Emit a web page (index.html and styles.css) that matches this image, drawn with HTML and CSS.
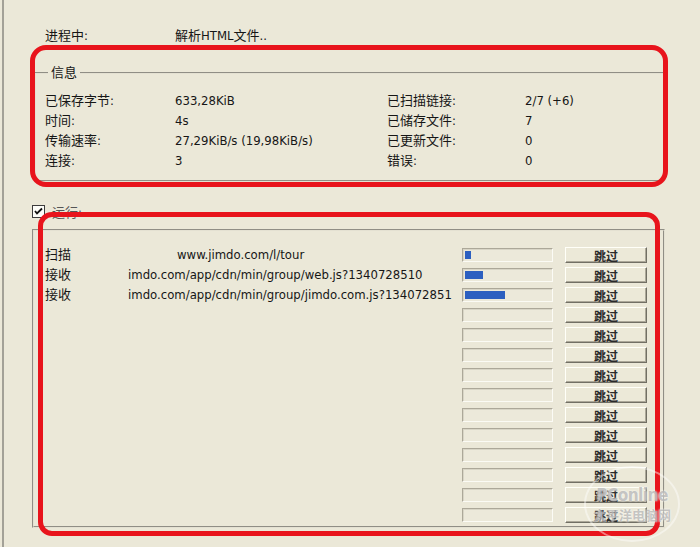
FILE: index.html
```html
<!DOCTYPE html>
<html lang="zh-CN">
<head>
  <meta charset="UTF-8" />
  <title>进程</title>
  <link rel="stylesheet" href="styles.css">
</head>
<body>
  <div class="screen">
    <div class="status">
      <span class="status-label">进程中:</span>
      <span class="status-value">解析HTML文件..</span>
    </div>

    <fieldset class="group info">
      <legend>信息</legend>
      <div class="info-grid">
        <span class="label">已保存字节:</span><span class="value">633,28KiB</span>
        <span class="label">已扫描链接:</span><span class="value">2/7 (+6)</span>
        <span class="label">时间:</span><span class="value">4s</span>
        <span class="label">已储存文件:</span><span class="value">7</span>
        <span class="label">传输速率:</span><span class="value">27,29KiB/s (19,98KiB/s)</span>
        <span class="label">已更新文件:</span><span class="value">0</span>
        <span class="label">连接:</span><span class="value">3</span>
        <span class="label">错误:</span><span class="value">0</span>
      </div>
    </fieldset>

    <label class="check-row">
      <span class="checkbox">
        <svg width="9" height="9" viewBox="0 0 9 9"><path d="M1 4 L3 6.5 L8 1.5" fill="none" stroke="#111" stroke-width="1.8"/></svg>
      </span>
      <span class="check-label">运行:</span>
    </label>

    <fieldset class="group run">
      <div class="run-list" id="run-list"></div>
    </fieldset>

    <div class="mark mark-info"></div>
    <div class="mark mark-run"></div>

    <div class="watermark">
      <span class="wm-logo">PConline</span>
      <span class="wm-sub">太平洋电脑网</span>
    </div>
  </div>

  <script>
    const jobs = [
      { action: "扫描", url: "www.jimdo.com/l/tour", done: 6, indent: true },
      { action: "接收", url: "imdo.com/app/cdn/min/group/web.js?1340728510", done: 18 },
      { action: "接收", url: "imdo.com/app/cdn/min/group/jimdo.com.js?134072851", done: 40 },
    ];
    const list = document.getElementById("run-list");

    for (let i = 0; i < 14; i++) {
      const job = jobs[i] || { action: "", url: "", done: 0 };
      const row = document.createElement("div");
      row.className = "run-row";
      row.innerHTML =
        '<span class="run-action">' + job.action + '</span>' +
        '<span class="run-url' + (job.indent ? ' indent' : '') + '">' + job.url + '</span>' +
        '<span class="bar"><span class="bar-fill" style="width:' + job.done + 'px"></span></span>' +
        '<button class="skip">跳过</button>';
      list.appendChild(row);
    }
  </script>
</body>
</html>
```

FILE: styles.css
```css
* { box-sizing: border-box; }

body {
  margin: 0;
  background-color: #ebe8d8;
  font-family: "DejaVu Sans Condensed", "Liberation Sans", "Noto Sans CJK SC", sans-serif;
  font-size: 13px;
  color: #161616;
}

.screen {
  position: relative;
  margin-left: 2px;
  height: 547px;
  border-left: 2px solid #a3a197;
  overflow: hidden;
}

.status {
  display: flex;
  height: 20px;
  align-items: baseline;
  margin-top: 25px;
  padding-left: 41px;
}

.status-label { width: 130px; }

.group {
  margin: 0;
  border: 2px groove #e4e1d2;
  min-width: 0;
}

.info {
  margin: 20px 0 0 30px;
  width: 631px;
  padding: 10px 9px 9px 9px;
}

.info legend {
  line-height: 16px;
  padding: 0 3px 0 3px;
  margin-left: 3px;
}

.info-grid {
  display: grid;
  grid-template-columns: 130px 212px 138px auto;
  grid-auto-rows: 20px;
  align-items: baseline;
}

.info-grid span { line-height: 20px; }

.check-row {
  display: flex;
  align-items: center;
  gap: 7px;
  height: 20px;
  margin-top: 19px;
  padding-left: 28px;
}

.checkbox {
  display: flex;
  align-items: center;
  justify-content: center;
  width: 13px;
  height: 13px;
  border: 1px solid #3c3c3c;
  background: #fdfdf8;
}

.check-label { color: #555; }

.run {
  margin: 8px 0 0 28px;
  width: 633px;
  padding: 14px 0 1px 11px;
}

.run-row {
  display: flex;
  align-items: center;
  height: 20px;
}

.run-action,
.run-url {
  line-height: 20px;
}

.run-action { width: 83px; }

.run-url {
  width: 334px;
  white-space: nowrap;
  overflow: hidden;
}

.run-url.indent { padding-left: 49px; }

.bar {
  width: 91px;
  height: 14px;
  padding: 2px;
  border: 1px solid;
  border-color: #aca899 #fbfbf5 #fbfbf5 #aca899;
  box-shadow: inset 1px 1px 0 #d8d5c6;
  background: #ece9da;
}

.bar-fill {
  display: block;
  height: 8px;
  background: #2c5fc0;
}

.skip {
  width: 82px;
  height: 16px;
  margin-left: 12px;
  padding: 0;
  font-family: "Noto Sans CJK SC", sans-serif;
  font-size: 12px;
  font-weight: bold;
  line-height: 13px;
  color: #2a2a2a;
  background: #ece9d8;
  border: 1px solid;
  border-color: #fffff8 #716f64 #716f64 #fffff8;
  box-shadow: inset -1px -1px 0 #aca899;
}

.mark {
  position: absolute;
  border: 5px solid #e8141c;
  border-radius: 16px;
  pointer-events: none;
}

.mark-info {
  left: 26px;
  top: 45px;
  width: 638px;
  height: 142px;
}

.mark-run {
  left: 34px;
  top: 212px;
  width: 622px;
  height: 324px;
  border-radius: 14px;
}

.watermark {
  position: absolute;
  left: 580px;
  top: 466px;
  width: 96px;
  height: 76px;
  border: 2px solid rgba(255, 255, 255, 0.45);
  border-radius: 50%;
  display: flex;
  flex-direction: column;
  align-items: center;
  justify-content: center;
  color: rgba(150, 150, 150, 0.55);
  text-shadow: 0 0 2px #fff;
}

.wm-logo {
  font-size: 17px;
  font-weight: bold;
  letter-spacing: -0.5px;
}

.wm-sub {
  font-size: 13px;
  font-weight: bold;
}
```
